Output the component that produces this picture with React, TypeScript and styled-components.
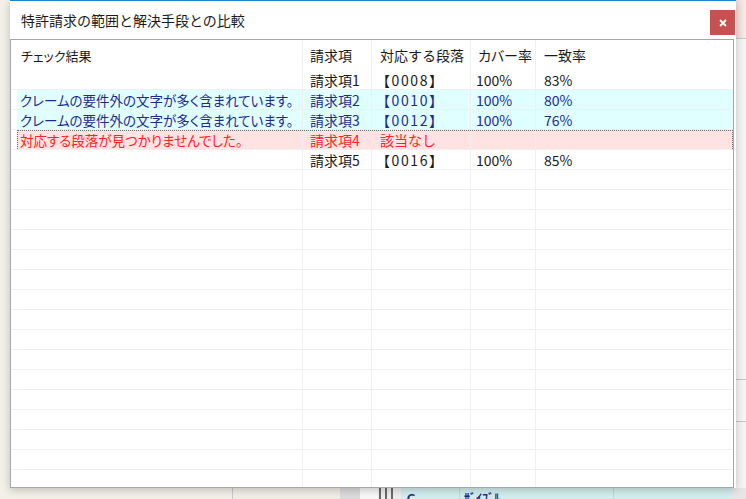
import React from "react";
import styled, { createGlobalStyle, css } from "styled-components";

type Tone = "plain" | "info" | "error";

interface ResultRow {
    message: string;
    claim: string;
    paragraph: string;
    cover: string;
    match: string;
    tone: Tone;
    focused?: boolean;
}

const rows: ResultRow[] = [
    { message: "", claim: "請求項1", paragraph: "【0008】", cover: "100%", match: "83%", tone: "plain" },
    { message: "クレームの要件外の文字が多く含まれています。", claim: "請求項2", paragraph: "【0010】", cover: "100%", match: "80%", tone: "info" },
    { message: "クレームの要件外の文字が多く含まれています。", claim: "請求項3", paragraph: "【0012】", cover: "100%", match: "76%", tone: "info" },
    { message: "対応する段落が見つかりませんでした。", claim: "請求項4", paragraph: "該当なし", cover: "", match: "", tone: "error", focused: true },
    { message: "", claim: "請求項5", paragraph: "【0016】", cover: "100%", match: "85%", tone: "plain" },
];

const EMPTY_ROWS = 16;

// column widths: row header, result, claim, paragraph, cover, match (rest)
const widths = [6, 286, 69, 99, 65];
const headerPads = [0, 4, 7, 8, 7, 8];
const cellPads = [0, 3, 7, 4, 5, 8];
const proportional = [false, true, false, false, true, false];

const toneColors: Record<Tone, { bg: string; fg: string }> = {
    plain: { bg: "#ffffff", fg: "#1a1a1a" },
    info: { bg: "#e0ffff", fg: "#1f2a8c" },
    error: { bg: "#ffe2e2", fg: "#ff2323" },
};

const GlobalStyle = createGlobalStyle`
    html, body {
        margin: 0;
        padding: 0;
        background: #f3f0e8;
    }
    body {
        font-family: "Noto Sans CJK JP", "Noto Sans", sans-serif;
    }
`;

const Desktop = styled.div`
    position: relative;
    width: 746px;
    height: 499px;
    overflow: hidden;
    background: #f3f0e8;
`;

/* pieces of the application window that lies behind the dialog */
const BackRight = styled.div`
    position: absolute;
    left: 736px;
    top: 0;
    width: 10px;
    height: 499px;
    display: flex;
    flex-direction: column;
    background: #f4f4f4;
`;

const BackPink = styled.div`
    height: 38px;
    background: linear-gradient(90deg, #f1dcd8, #f8ebe8);
    border-bottom: 1px solid #c8c8c8;
`;

const BackBand = styled.div<{ $h: number }>`
    height: ${(p) => p.$h}px;
    border-bottom: 1px solid #c4c4c4;
`;

const BackBottom = styled.div`
    position: absolute;
    left: 0;
    top: 488px;
    width: 746px;
    height: 11px;
    display: flex;
    overflow: hidden;
    background: #e6e6e6;
`;

const BackSeg = styled.div<{ $w: number; $bg: string; $line?: string }>`
    flex: 0 0 ${(p) => p.$w}px;
    background: ${(p) => p.$bg};
    border-right: 1px solid ${(p) => p.$line || "transparent"};
    box-sizing: border-box;
    overflow: hidden;
    color: #1f2a8c;
    font-size: 12px;
    line-height: 14px;
    font-weight: bold;
    padding-top: 3px;
    padding-left: 4px;
    white-space: nowrap;
`;

const Bars = styled.div`
    flex: 0 0 22px;
    display: flex;
    gap: 4px;
    padding-left: 1px;
    background: #eeeeee;
    & > span {
        width: 2px;
        background: #6a6a6a;
    }
`;

/* dialog */
const Dialog = styled.div`
    position: absolute;
    left: 10px;
    top: 0;
    width: 726px;
    height: 488px;
    box-sizing: border-box;
    background: #ffffff;
    border-top: 1px solid #1883d7;
    display: flex;
    flex-direction: column;
    box-shadow: 0 2px 8px rgba(0, 0, 0, 0.22);
`;

const TitleBar = styled.div`
    height: 38px;
    flex: 0 0 38px;
    display: flex;
    justify-content: space-between;
    align-items: flex-start;
`;

const Title = styled.div`
    margin: 9px 0 0 11px;
    font-size: 14px;
    line-height: 20px;
    color: #1a1a1a;
`;

const CloseButton = styled.button`
    margin: 9px 1px 0 0;
    width: 25px;
    height: 25px;
    border: none;
    padding: 0;
    background: #c75050;
    display: flex;
    align-items: center;
    justify-content: center;
`;

const Grid = styled.div`
    flex: 1;
    width: 724px;
    box-sizing: border-box;
    border: 1px solid #a3a6aa;
    overflow: hidden;
    background: #ffffff;
`;

const HeaderRow = styled.div`
    display: flex;
    height: 30px;
`;

const Row = styled.div<{ $focused?: boolean }>`
    display: flex;
    height: 20px;
    position: relative;
    ${(p) =>
        p.$focused &&
        css`
            &::after {
                content: "";
                position: absolute;
                left: 6px;
                right: 0;
                top: 0;
                bottom: 1px;
                border: 1px dotted #6a6a6a;
                border-bottom: none;
                pointer-events: none;
            }
        `}
`;

const Cell = styled.div<{ $col: number; $tone?: Tone; $header?: boolean }>`
    box-sizing: border-box;
    ${(p) => (p.$col < widths.length ? `flex: 0 0 ${widths[p.$col]}px;` : "flex: 1;")}
    padding-left: ${(p) => (p.$header ? headerPads[p.$col] : cellPads[p.$col])}px;
    border-right: 1px solid ${(p) => (p.$col === 0 || p.$col === 5 ? "transparent" : "#efefef")};
    border-bottom: 1px solid ${(p) => (p.$header ? "transparent" : "#efefef")};
    background: ${(p) => (p.$col === 0 || !p.$tone ? "#ffffff" : toneColors[p.$tone].bg)};
    color: ${(p) => (p.$tone ? toneColors[p.$tone].fg : "#1a1a1a")};
    font-size: ${(p) => (p.$col === 1 ? (p.$header ? "13px" : "13.5px") : "14px")};
    font-feature-settings: ${(p) => (proportional[p.$col] && (p.$header || p.$col === 1) ? '"palt"' : "normal")};
    line-height: ${(p) => (p.$header ? "31px" : "20px")};
    white-space: nowrap;
    overflow: hidden;
`;

// paragraph numbers like 【0008】 are drawn wider than the plain text
const ParaText = styled.span<{ $numbered: boolean }>`
    letter-spacing: ${(p) => (p.$numbered ? "1.6px" : "0")};
    margin-left: ${(p) => (p.$numbered ? "0" : "4px")};
`;

const CloseIcon = () => (
    <svg width="8" height="8" viewBox="0 0 8 8">
        <path d="M1 1 L7 7 M7 1 L1 7" stroke="#ffffff" strokeWidth="1.8" />
    </svg>
);

const App: React.FC = () => {
    const headers = ["", "チェック結果", "請求項", "対応する段落", "カバー率", "一致率"];

    return (
        <Desktop>
            <GlobalStyle />
            <BackRight>
                <BackPink />
                <BackBand $h={340} />
                <BackBand $h={41} />
            </BackRight>
            <BackBottom>
                <BackSeg $w={233} $bg="#f3f0e8" $line="#c9c9c9" />
                <BackSeg $w={107} $bg="#f1eee6" />
                <BackSeg $w={20} $bg="#dcdcdc" />
                <BackSeg $w={18} $bg="#f8f8f8" />
                <Bars>
                    <span />
                    <span />
                    <span />
                </Bars>
                <BackSeg $w={59} $bg="#d3eeee" $line="#bcdada">Ｃ</BackSeg>
                <BackSeg $w={154} $bg="#d3eeee" $line="#bcdada">ｻﾞｲﾌﾞﾙ</BackSeg>
                <BackSeg $w={118} $bg="#d3eeee" />
            </BackBottom>

            <Dialog>
                <TitleBar>
                    <Title>特許請求の範囲と解決手段との比較</Title>
                    <CloseButton>
                        <CloseIcon />
                    </CloseButton>
                </TitleBar>
                <Grid>
                    <HeaderRow>
                        {headers.map((h, i) => (
                            <Cell key={i} $col={i} $header>
                                {h}
                            </Cell>
                        ))}
                    </HeaderRow>
                    {rows.map((r, i) => (
                        <Row key={i} $focused={r.focused}>
                            <Cell $col={0} $tone={r.tone} />
                            <Cell $col={1} $tone={r.tone}>{r.message}</Cell>
                            <Cell $col={2} $tone={r.tone}>{r.claim}</Cell>
                            <Cell $col={3} $tone={r.tone}>
                                <ParaText $numbered={r.paragraph.startsWith("【")}>{r.paragraph}</ParaText>
                            </Cell>
                            <Cell $col={4} $tone={r.tone}>{r.cover}</Cell>
                            <Cell $col={5} $tone={r.tone}>{r.match}</Cell>
                        </Row>
                    ))}
                    {Array.from({ length: EMPTY_ROWS }).map((_, i) => (
                        <Row key={"e" + i}>
                            {headers.map((_, c) => (
                                <Cell key={c} $col={c} />
                            ))}
                        </Row>
                    ))}
                </Grid>
            </Dialog>
        </Desktop>
    );
};

export default App;
